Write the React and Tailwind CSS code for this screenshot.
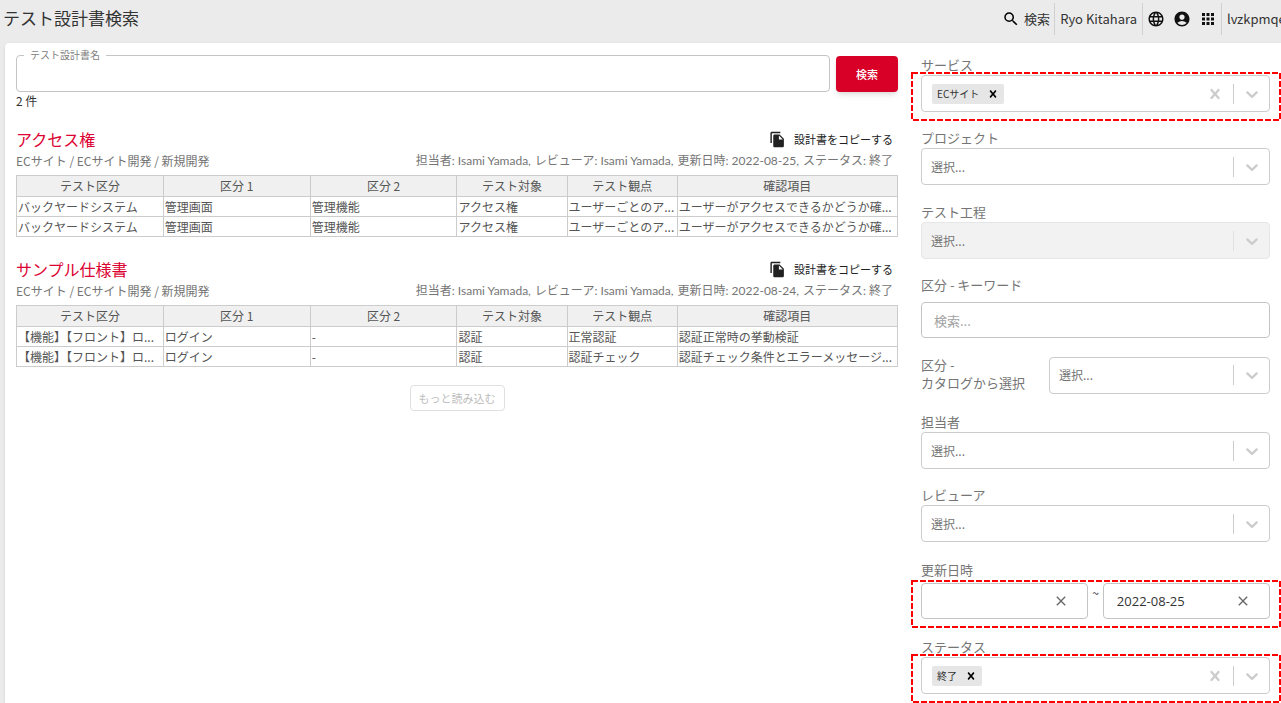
import React, { useState } from 'react';
import { MdSearch, MdLanguage, MdAccountCircle, MdApps, MdFileCopy, MdClose } from 'react-icons/md';

const COLUMNS = ['テスト区分', '区分 1', '区分 2', 'テスト対象', 'テスト観点', '確認項目'];

const DOCUMENTS = [
  {
    id: 1,
    title: 'アクセス権',
    path: 'ECサイト / ECサイト開発 / 新規開発',
    meta: ['担当者: Isami Yamada,', 'レビューア: Isami Yamada,', '更新日時: 2022-08-25,', 'ステータス: 終了'],
    rows: [
      ['バックヤードシステム', '管理画面', '管理機能', 'アクセス権', 'ユーザーごとのア...', 'ユーザーがアクセスできるかどうか確...'],
      ['バックヤードシステム', '管理画面', '管理機能', 'アクセス権', 'ユーザーごとのア...', 'ユーザーがアクセスできるかどうか確...']
    ]
  },
  {
    id: 2,
    title: 'サンプル仕様書',
    path: 'ECサイト / ECサイト開発 / 新規開発',
    meta: ['担当者: Isami Yamada,', 'レビューア: Isami Yamada,', '更新日時: 2022-08-24,', 'ステータス: 終了'],
    rows: [
      ['【機能】【フロント】ロ...', 'ログイン', '-', '認証', '正常認証', '認証正常時の挙動検証'],
      ['【機能】【フロント】ロ...', 'ログイン', '-', '認証', '認証チェック', '認証チェック条件とエラーメッセージ...']
    ]
  }
];

const CrossIcon = ({ className }) => (
  <svg viewBox="0 0 20 20" fill="currentColor" className={className} aria-hidden="true">
    <path d="M14.348 14.849c-0.469 0.469-1.229 0.469-1.697 0l-2.651-3.030-2.651 3.029c-0.469 0.469-1.229 0.469-1.697 0-0.469-0.469-0.469-1.229 0-1.697l2.758-3.15-2.759-3.152c-0.469-0.469-0.469-1.228 0-1.697s1.228-0.469 1.697 0l2.652 3.031 2.651-3.031c0.469-0.469 1.228-0.469 1.697 0s0.469 1.229 0 1.697l-2.758 3.152 2.758 3.15c0.469 0.469 0.469 1.229 0 1.698z" />
  </svg>
);

const ChevronIcon = ({ className }) => (
  <svg viewBox="0 0 20 20" fill="currentColor" className={className} aria-hidden="true">
    <path d="M4.516 7.548c0.436-0.446 1.043-0.481 1.576 0l3.908 3.747 3.908-3.747c0.533-0.481 1.141-0.446 1.574 0 0.436 0.445 0.408 1.197 0 1.615-0.406 0.418-4.695 4.502-4.695 4.502-0.217 0.223-0.502 0.335-0.787 0.335s-0.57-0.112-0.789-0.335c0 0-4.287-4.084-4.695-4.502s-0.436-1.17 0-1.615z" />
  </svg>
);

// Dashed frame drawn over the fields that are set by default
const Highlight = () => (
  <svg className="absolute -left-[10px] -top-[3px] w-[calc(100%+21px)] h-[calc(100%+12px)] pointer-events-none" aria-hidden="true">
    <rect x="1" y="1" className="w-[calc(100%-2px)] h-[calc(100%-2px)]" fill="none" stroke="#ff0000" strokeWidth="2" strokeDasharray="6 2" />
  </svg>
);

const FieldLabel = ({ htmlFor, children }) => (
  <label htmlFor={htmlFor} className="block text-[13px] leading-4 pb-0.5 text-[#757575]">
    {children}
  </label>
);

const SelectBox = ({ id, disabled }) => (
  <div className="relative w-full">
    <select
      id={id}
      disabled={disabled}
      className="block w-full h-[37px] pl-[9px] pr-12 appearance-none rounded border border-[#cccccc] bg-white text-xs text-[#757575] disabled:bg-[#f2f2f2] disabled:border-[#e6e6e6] disabled:opacity-100"
    >
      <option>選択...</option>
    </select>
    <div className="absolute inset-y-0 right-0 flex items-center pointer-events-none">
      <span className={disabled ? 'w-px h-5 bg-[#e0e0e0]' : 'w-px h-5 bg-[#cccccc]'} />
      <ChevronIcon className="w-5 h-5 mx-2 text-[#cccccc]" />
    </div>
  </div>
);

const TagSelect = ({ id, initial }) => {
  const [tags, setTags] = useState(initial);

  return (
    <div className="relative">
      <div className="flex items-center h-[37px] pl-[10px] rounded border border-[#cccccc] bg-white">
        {tags.map((tag) => (
          <span key={tag} className="flex items-center h-5 pl-[5px] rounded-[2px] bg-[#e6e6e6] text-[10px] text-[#333333]">
            {tag}
            <button
              type="button"
              aria-label={`${tag}を削除`}
              onClick={() => setTags((prev) => prev.filter((t) => t !== tag))}
              className="flex items-center h-full pl-[7px] pr-1 text-black"
            >
              <CrossIcon className="w-[14px] h-[14px]" />
            </button>
          </span>
        ))}
        <input id={id} type="text" className="flex-1 min-w-0 h-6 px-1 text-xs outline-none" />
        <button type="button" aria-label="クリア" onClick={() => setTags([])} className="px-2 text-[#cccccc]">
          <CrossIcon className="w-5 h-5" />
        </button>
        <span className="w-px h-5 bg-[#cccccc]" />
        <ChevronIcon className="w-5 h-5 ml-2 mr-[7px] text-[#cccccc]" />
      </div>
      <Highlight />
    </div>
  );
};

const DateInput = ({ id, label, initial }) => {
  const [value, setValue] = useState(initial);

  return (
    <div className="flex flex-1 min-w-0 items-center h-9 pl-[13px] pr-[18px] rounded border border-[#c4c4c4] bg-white">
      <input
        id={id}
        type="text"
        aria-label={label}
        value={value}
        onChange={(e) => setValue(e.target.value)}
        className="flex-1 min-w-0 h-7 font-['Open_Sans','Noto_Sans_CJK_JP',sans-serif] text-[13px] text-[#333333] outline-none"
      />
      <button type="button" aria-label="クリア" onClick={() => setValue('')} className="text-[#666666]">
        <MdClose className="w-4 h-4" />
      </button>
    </div>
  );
};

const DocumentCard = ({ doc }) => (
  <section className="mb-5">
    <div className="flex items-center justify-between h-6">
      <h2>
        <a href="#" className="text-base leading-6 text-[#dc0032]">{doc.title}</a>
      </h2>
      <button type="button" className="flex items-center gap-2 pr-[5px] text-[11px] text-[#212121]">
        <MdFileCopy className="w-[17px] h-[17px]" />
        設計書をコピーする
      </button>
    </div>
    <div className="flex items-center justify-between h-5 mb-1 pr-[5px] text-xs text-[#757575]">
      <p>{doc.path}</p>
      <p className="flex gap-1 font-['Lato','Noto_Sans_CJK_JP',sans-serif]">
        {doc.meta.map((item) => (
          <span key={item}>{item}</span>
        ))}
      </p>
    </div>
    <table className="w-full table-fixed border-collapse text-xs leading-4 text-[#555555]">
      <colgroup>
        <col className="w-1/6" />
        <col className="w-1/6" />
        <col className="w-1/6" />
        <col className="w-1/8" />
        <col className="w-1/8" />
        <col className="w-1/4" />
      </colgroup>
      <thead>
        <tr>
          {COLUMNS.map((name) => (
            <th key={name} className="h-[21px] p-0 border border-[#cccccc] bg-[#f0f0f0] font-normal">{name}</th>
          ))}
        </tr>
      </thead>
      <tbody>
        {doc.rows.map((row, i) => (
          <tr key={i}>
            {row.map((cell, j) => (
              <td key={j} className="h-5 px-px py-0 border border-[#cccccc] whitespace-nowrap overflow-hidden">{cell}</td>
            ))}
          </tr>
        ))}
      </tbody>
    </table>
  </section>
);

const Header = () => (
  <header className="flex items-center justify-between h-[43px] pl-[3px] pb-1.5 overflow-hidden">
    <h1 className="text-[17px] leading-5 pb-0.5 text-[#333333] whitespace-nowrap">テスト設計書検索</h1>
    <nav className="flex items-center h-8 text-[13px] text-[#333333] whitespace-nowrap">
      <a href="#" className="flex items-center gap-1 pr-1">
        <MdSearch className="w-[18px] h-[18px] text-black" />
        検索
      </a>
      <a href="#" className="flex items-center h-full px-[5px] border-l border-[#d0d0d0]">Ryo Kitahara</a>
      <div className="flex items-center gap-2 h-full px-1 border-l border-[#d0d0d0] text-[#111111]">
        <button type="button" aria-label="言語"><MdLanguage className="w-[18px] h-[18px]" /></button>
        <button type="button" aria-label="アカウント"><MdAccountCircle className="w-[18px] h-[18px]" /></button>
        <button type="button" aria-label="アプリ"><MdApps className="w-[18px] h-[18px]" /></button>
      </div>
      <a href="#" className="flex items-center w-[60px] h-full pl-[5px] border-l border-[#d0d0d0] overflow-hidden">lvzkpmqe</a>
    </nav>
  </header>
);

const App = () => {
  const [name, setName] = useState('');

  return (
    <div className="min-h-screen flex flex-col overflow-hidden bg-[#ebebeb] font-['Noto_Sans_CJK_JP',sans-serif]">
      <Header />
      <div className="flex flex-1 gap-[23px] ml-[5px] pl-[11px] pr-[11px] rounded-tl bg-white shadow-sm">
        {/* Results */}
        <main className="flex-1 min-w-0 pt-[5px]">
          <form className="flex items-end gap-1.5" onSubmit={(e) => e.preventDefault()}>
            <fieldset className="flex-1 min-w-0 h-[44px] px-[7px] rounded border border-[#c4c4c4]">
              <legend className="px-1.5 text-[10px] leading-[14px] text-[#808080]">
                <label htmlFor="name">テスト設計書名</label>
              </legend>
              <input
                id="name"
                type="text"
                value={name}
                onChange={(e) => setName(e.target.value)}
                className="block w-full h-7 text-sm outline-none"
              />
            </fieldset>
            <button type="submit" className="w-[62px] h-9 rounded bg-[#d80027] text-[11px] font-medium text-white shadow-md">
              検索
            </button>
          </form>
          <p className="mb-[17px] text-xs leading-[18px] text-[#333333]">2 件</p>

          {DOCUMENTS.map((doc) => (
            <DocumentCard key={doc.id} doc={doc} />
          ))}

          <div className="flex justify-center -mt-0.5">
            <button type="button" disabled className="h-[26px] px-2 rounded border border-[#e0e0e0] text-[11px] text-[#bdbdbd]">
              もっと読み込む
            </button>
          </div>
        </main>

        {/* Filters */}
        <aside className="w-[349px] shrink-0 pt-[14px] pb-[10px]">
          <div className="mb-[18px]">
            <FieldLabel htmlFor="service">サービス</FieldLabel>
            <TagSelect id="service" initial={['ECサイト']} />
          </div>
          <div className="mb-[19px]">
            <FieldLabel htmlFor="project">プロジェクト</FieldLabel>
            <SelectBox id="project" />
          </div>
          <div className="mb-[18px]">
            <FieldLabel htmlFor="process">テスト工程</FieldLabel>
            <SelectBox id="process" disabled />
          </div>
          <div className="mb-[18px]">
            <FieldLabel htmlFor="keyword">区分 - キーワード</FieldLabel>
            <input
              id="keyword"
              type="text"
              placeholder="検索..."
              className="block w-full h-9 mt-[7px] px-3 rounded border border-[#c4c4c4] text-[13px] placeholder:text-[#a2a2a2]"
            />
          </div>
          <div className="flex items-center gap-5 mb-5">
            <FieldLabel htmlFor="catalog">
              <span className="block w-[108px] leading-[18px] whitespace-nowrap">区分 -<br />カタログから選択</span>
            </FieldLabel>
            <SelectBox id="catalog" />
          </div>
          <div className="mb-[18px]">
            <FieldLabel htmlFor="assignee">担当者</FieldLabel>
            <SelectBox id="assignee" />
          </div>
          <div className="mb-5">
            <FieldLabel htmlFor="reviewer">レビューア</FieldLabel>
            <SelectBox id="reviewer" />
          </div>
          <div className="mb-5">
            <FieldLabel htmlFor="updated-from">更新日時</FieldLabel>
            <div className="relative flex gap-1 mt-[3px]">
              <DateInput id="updated-from" label="更新日時 開始" initial="" />
              <span className="text-xs leading-5 text-[#333333]">~</span>
              <DateInput id="updated-to" label="更新日時 終了" initial="2022-08-25" />
              <Highlight />
            </div>
          </div>
          <div>
            <FieldLabel htmlFor="status">ステータス</FieldLabel>
            <TagSelect id="status" initial={['終了']} />
          </div>
        </aside>
      </div>
    </div>
  );
};

export default App;
